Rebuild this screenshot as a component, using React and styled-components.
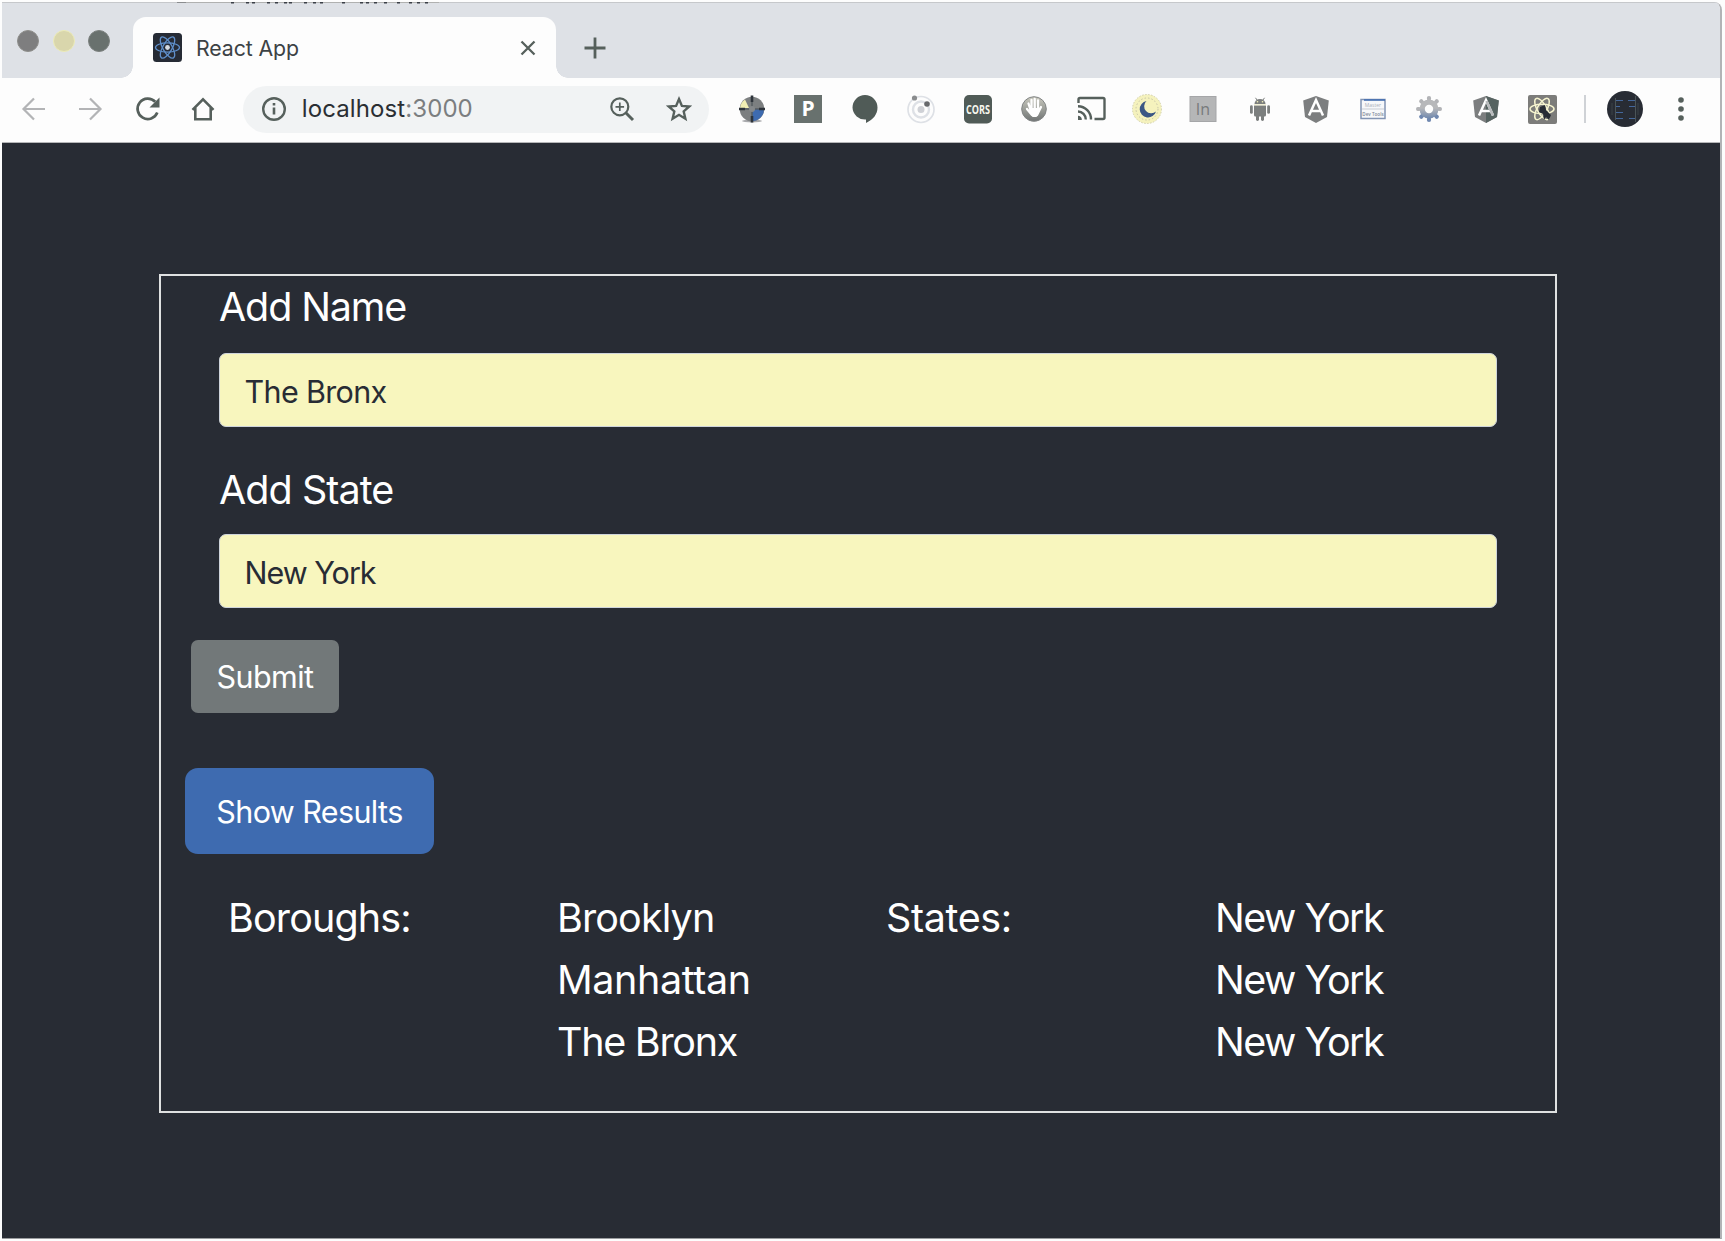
import React from 'react';
import styled, { createGlobalStyle } from 'styled-components';

const Global = createGlobalStyle`
  * { box-sizing: border-box; }
  body { margin: 0; background: #fdfdfd; font-family: Inter, "Liberation Sans", sans-serif; }
`;

const Window = styled.div`
  width: 1720px;
  height: 1237px;
  margin: 2px 0 0 2px;
  display: flex;
  flex-direction: column;
  border-right: 2px solid #b2b3b6;
  border-bottom: 1px solid #9b9d9f;
  border-radius: 0 8px 0 0;
  overflow: hidden;
`;

const TabStrip = styled.div`
  position: relative;
  height: 76px;
  flex: none;
  display: flex;
  background: #dee1e6;
  border-top: 1px solid #c6c8cb;
`;

const EdgeMarks = styled.svg`
  position: absolute;
  top: -1px;
  left: 0;
`;

const Lights = styled.div`
  display: flex;
  gap: 13.5px;
  width: 131px;
  padding: 27px 0 0 15px;
`;

const Light = styled.span`
  width: 22px;
  height: 22px;
  border-radius: 50%;
  background: ${(p) => p.$fill};
  border: 1px solid ${(p) => p.$edge};
`;

const Tab = styled.div`
  width: 423px;
  height: 61px;
  margin-top: 14px;
  display: flex;
  align-items: center;
  padding: 0 18px 0 20px;
  background: #fdfdfd;
  border-radius: 13px 13px 0 0;
  position: relative;
  &::before, &::after {
    content: '';
    position: absolute;
    bottom: 0;
    width: 12px;
    height: 12px;
  }
  &::before { left: -12px; background: radial-gradient(circle at 0 0, transparent 11.5px, #fdfdfd 12px); }
  &::after { right: -12px; background: radial-gradient(circle at 100% 0, transparent 11.5px, #fdfdfd 12px); }
`;

const TabTitle = styled.span`
  flex: 1;
  margin-left: 14px;
  font-size: 21.3px;
  line-height: 30px;
  letter-spacing: -0.1px;
  color: #3c4245;
`;

const NewTab = styled.div`
  padding: 27px 0 0 21px;
`;

const Toolbar = styled.div`
  height: 65px;
  flex: none;
  display: flex;
  align-items: center;
  padding: 0 0 2px 3.5px;
  background: #fdfdfd;
  border-bottom: 1px solid #b6b7b9;
`;

const Slot = styled.span`
  width: ${(p) => p.$w || 56.45}px;
  flex: none;
  display: flex;
  justify-content: center;
`;

const Omnibox = styled.div`
  width: 466px;
  height: 47px;
  margin: 0 15px 0 11.5px;
  padding: 0 14px 0 15px;
  display: flex;
  align-items: center;
  border-radius: 24px;
  background: #f1f3f4;
`;

const Url = styled.span`
  flex: 1;
  margin-left: 12px;
  font-size: 24px;
  line-height: 34px;
  letter-spacing: 0.1px;
  color: #2a2e33;
`;

const Port = styled.span`
  color: #7b7e80;
`;

const OmniIcons = styled.span`
  display: flex;
  gap: 24.5px;
`;

const Separator = styled.span`
  width: 2px;
  height: 28px;
  margin: 0 21px 0 14px;
  background: #cfd2d6;
`;

const Page = styled.main`
  flex: 1;
  background: #282c34;
  padding: 131px 0 0 157px;
`;

const Panel = styled.section`
  width: 1398px;
  height: 839px;
  border: 2px solid #dfe1e1;
  padding: 1px 58px 0 23px;
  display: flex;
  flex-direction: column;
`;

const Field = styled.label`
  display: flex;
  flex-direction: column;
  margin: 0 0 ${(p) => p.$after}px 35px;
`;

const Caption = styled.span`
  height: ${(p) => p.$h}px;
  font-size: 39.5px;
  line-height: 61px;
  color: #fff;
  letter-spacing: ${(p) => p.$ls || 0}px;
`;

const Input = styled.input`
  width: 1278px;
  height: 74px;
  padding: 3px 24.500px 0;
  border: 1px solid #ced4da;
  border-radius: 7px;
  background: #f8f6be;
  color: #282c34;
  font: 30.5px Inter, "Liberation Sans", sans-serif;
  letter-spacing: ${(p) => p.$ls || 0}px;
  outline: none;
`;

const Button = styled.button`
  align-self: flex-start;
  border: 0;
  padding: 0;
  color: #fff;
  font: 30.5px Inter, "Liberation Sans", sans-serif;
  letter-spacing: -0.6px;
`;

const SubmitButton = styled(Button)`
  width: 148px;
  height: 73px;
  margin-left: 7px;
  border-radius: 7px;
  background: #727879;
`;

const ResultsButton = styled(Button)`
  width: 249px;
  height: 86px;
  margin: 55px 0 0 1px;
  border-radius: 13px;
  background: #3e6bb0;
`;

const Results = styled.div`
  display: grid;
  grid-template-columns: repeat(4, 329px);
  margin: 34px 0 0 44px;
`;

const Column = styled.div`
  display: flex;
  flex-direction: column;
`;

const Cell = styled.span`
  font-size: 39.5px;
  line-height: 61.8px;
  color: #fff;
  letter-spacing: ${(p) => p.$ls || 0}px;
`;

const Glyph = styled.svg`
  display: block;
  flex: none;
  overflow: visible;
`;

const Svg = ({ s = 32, children, ...rest }) => (
  <Glyph width={s} height={s} viewBox={`0 0 ${s} ${s}`} fill="none" {...rest}>{children}</Glyph>
);

const SvgLabel = styled.text`
  font-family: "Open Sans", sans-serif;
  font-weight: ${(p) => p.$weight || 700};
  text-anchor: middle;
`;

const ink = '#56605c';

const Orbits = ({ cx, cy, rx, ry, stroke, w }) => (
  <g stroke={stroke} strokeWidth={w}>
    {[0, 60, 120].map((a) => (
      <ellipse key={a} cx={cx} cy={cy} rx={rx} ry={ry} transform={`rotate(${a} ${cx} ${cy})`} />
    ))}
  </g>
);

const Favicon = () => (
  <Svg s={29}>
    <rect width="29" height="29" rx="3.5" fill="#262b35" />
    <Orbits cx={14.5} cy={14.5} rx={12} ry={4.6} stroke="#5f8fca" w={1.3} />
    <circle cx="14.5" cy="14.5" r="2.4" fill="#d5dbe2" />
  </Svg>
);

const Back = () => <Svg stroke="#b3b4b6" strokeWidth="2.2"><path d="M27 16H6M16 5.500L5.500 16L16 26.500" /></Svg>;
const Forward = () => <Svg stroke="#b3b4b6" strokeWidth="2.2"><path d="M5 16H26M16 5.500L26.500 16L16 26.500" /></Svg>;
const Reload = () => (
  <Svg>
    <path d="M26.300 19.500A10.200 10.200 0 1 1 24.200 8.800" stroke={ink} strokeWidth="2.700" />
    <path d="M28.500 4.500V14.500H18.500Z" fill={ink} />
  </Svg>
);
const Home = () => <Svg stroke={ink} strokeWidth="2.600"><path d="M5.500 16.800L16 6.300L26.500 16.800M8.300 14.500V26.300H23.700V14.500" /></Svg>;
const Info = () => (
  <Svg>
    <circle cx="16" cy="16" r="10.800" stroke={ink} strokeWidth="2.400" />
    <path d="M16 14.500V21.500M16 10V12.600" stroke={ink} strokeWidth="2.600" />
  </Svg>
);
const ZoomIn = () => (
  <Svg stroke={ink}>
    <circle cx="13.800" cy="13.800" r="8.500" strokeWidth="2.200" />
    <path d="M13.800 9.500V18.100M9.500 13.800H18.100" strokeWidth="1.700" />
    <path d="M19.800 19.800L27 27" strokeWidth="3" />
  </Svg>
);
const Star = () => <Svg><path d="M16 6L18.900 12.900L26.300 13.500L20.700 18.400L22.400 25.700L16 21.800L9.600 25.700L11.300 18.400L5.700 13.500L13.100 12.900Z" stroke={ink} strokeWidth="2.400" /></Svg>;

const Target = () => (
  <Svg>
    <ellipse cx="16" cy="28" rx="10" ry="1.500" fill="#a9aaad" />
    <circle cx="16" cy="16" r="12.300" fill="#7c7f80" />
    <path d="M16 18L18 16H28A12 12 0 0 1 16 28Z" fill="#3e6bb0" />
    <path d="M13 15H4A12 12 0 0 1 9 6.500Z" fill="#f2efb4" />
    <path d="M16 2.500V9M16 23V29.500M3 16H9M23 16H29" stroke="#2e343b" strokeWidth="2.600" />
    <path d="M16 9V23M9 16H23" stroke="#565c60" strokeWidth="1.500" />
    <circle cx="16" cy="16" r="3" fill="#85888a" />
  </Svg>
);
const LetterP = () => (
  <Svg>
    <rect x="2" y="2" width="28" height="28" fill="#68716e" />
    <SvgLabel x="16" y="23" fontSize="21" fill="#fff">P</SvgLabel>
  </Svg>
);
const Balloon = () => <Svg><path d="M16 2A12.500 12.500 0 0 1 28.500 14.500C28.500 21 24.500 26.500 17 30V26.500A12.500 12.500 0 0 1 3.500 14.500A12.500 12.500 0 0 1 16 2Z" fill="#505b57" /></Svg>;
const Planets = () => (
  <Svg>
    <circle cx="16" cy="16.500" r="13" stroke="#dee1e6" strokeWidth="1.700" />
    <circle cx="16" cy="16.500" r="8" stroke="#dee1e6" strokeWidth="2.400" />
    <circle cx="16" cy="16.500" r="3.500" fill="#cfd1d6" />
    <circle cx="9.500" cy="5" r="2.600" fill="#8a8c8e" />
    <circle cx="22" cy="11" r="2.800" fill="#67696c" />
  </Svg>
);
const Cors = () => (
  <Svg>
    <rect x="2" y="2" width="28" height="28.500" rx="5" fill="#505b57" />
    <SvgLabel x="16" y="20.500" fontSize="12" textLength="24" lengthAdjust="spacingAndGlyphs" fill="#f7f7ee">CORS</SvgLabel>
  </Svg>
);
const Hand = () => (
  <Svg>
    <defs><linearGradient id="handFill" x1="0" y1="0" x2="0" y2="1"><stop offset="0" stopColor="#c9c9be" /><stop offset="1" stopColor="#707474" /></linearGradient></defs>
    <circle cx="16" cy="16" r="12.300" fill="url(#handFill)" stroke="#828585" strokeWidth="1" />
    <path d="M10.500 10.500L12.500 17M13.500 7V16M16.700 6V16M20 7.500V17M9 16L14 22M23 14L19 22" stroke="#fff" strokeWidth="2.300" strokeLinecap="round" />
    <path d="M12 15H21V20L18.500 24H14.500L11.500 19Z" fill="#fff" />
  </Svg>
);
const Cast = () => (
  <Svg stroke={ink} strokeWidth="2.400">
    <path d="M3.500 10V6.500Q3.500 5 5 5H28Q29.500 5 29.500 6.500V24.500Q29.500 26 28 26H19.500" />
    <path d="M3 13.300A13 13 0 0 1 16 26.500M3 18.500A8 8 0 0 1 10.800 26.500" />
    <path d="M3 22.800A3.800 3.800 0 0 1 6.800 27H3Z" fill={ink} stroke="none" />
  </Svg>
);
const Moon = () => (
  <Svg>
    <circle cx="16" cy="16" r="14.500" fill="#f5f2bd" stroke="#d2d0ae" strokeDasharray="1.500 1.500" />
    <circle cx="16" cy="16" r="11" stroke="#c5c3a8" strokeDasharray="1.500 2" />
    <path d="M15.500 8A8.300 8.300 0 1 0 25 18.500A6 6 0 1 1 15.500 8Z" fill="#3b5784" />
  </Svg>
);
const LetterIn = () => (
  <Svg>
    <rect x="3" y="3.500" width="26" height="25" fill="#b5b6b7" stroke="#a5a6a8" />
    <SvgLabel x="16" y="21.500" fontSize="16" $weight={400} fill="#787a7c">In</SvgLabel>
  </Svg>
);
const Android = () => (
  <Svg>
    <g fill="#7c7f7e">
      <path d="M10.500 11A5.500 5 0 0 1 21.500 11Z" />
      <path d="M10 12.500H22V22Q22 23.500 20.500 23.500H11.500Q10 23.500 10 22Z" />
      <rect x="6" y="12.300" width="2.800" height="8.500" rx="1.400" />
      <rect x="23.200" y="12.300" width="2.800" height="8.500" rx="1.400" />
      <rect x="12" y="22" width="3" height="6" rx="1.400" />
      <rect x="17" y="22" width="3" height="6" rx="1.400" />
    </g>
    <path d="M11.500 4.800L13 7M20.500 4.800L19 7" stroke="#7c7f7e" />
    <circle cx="13.500" cy="8.800" r=".8" fill="#f8f6be" /><circle cx="18.500" cy="8.800" r=".8" fill="#f8f6be" />
    <path d="M10 11.800H22" stroke="#e9e6b8" strokeWidth=".8" />
  </Svg>
);
const Angular = ({ dark }) => (
  <Svg>
    <path d="M16 3L28.800 7.500L27 24L16 30L5 24L3.200 7.500Z" fill="#7c7e7f" />
    {dark && <path d="M16 3L28.800 7.500L27 24L16 30Z" fill="#566361" />}
    <path d="M9 22.500L16 7L23 22.500M11.800 18H20.200" stroke="#fff" strokeWidth="2.500" />
    {dark && <path d="M16.500 8L23 22.500" stroke="#b8babc" strokeWidth="2.500" />}
  </Svg>
);
const Card = () => (
  <Svg>
    <rect x="4" y="6.500" width="24" height="19" fill="#f7f8fa" stroke="#8294b3" strokeWidth="1.500" />
    <path d="M7 7H28" stroke="#3e6bb0" strokeWidth="1.600" />
    <path d="M5 16H27" stroke="#c9cdd4" strokeWidth="1" />
    <SvgLabel x="16" y="13.500" fontSize="5" $weight={400} fill="#aab0b9">Master</SvgLabel>
    <SvgLabel x="16" y="22.500" fontSize="4.600" $weight={600} fill="#7d8797">Dev Tools</SvgLabel>
  </Svg>
);
const Gear = () => (
  <Svg>
    <defs><linearGradient id="gearFill" x1="0" y1="0" x2="0" y2="1"><stop offset=".45" stopColor="#b7b8ba" /><stop offset="1" stopColor="#7088ae" /></linearGradient></defs>
    <g fill="url(#gearFill)">
      {[0, 45, 90, 135, 180, 225, 270, 315].map((a) => (
        <path key={a} d="M14.300 8L13.900 5Q13.800 3 16 3Q18.200 3 18.100 5L17.700 8Z" fill={a > 90 && a < 270 ? '#7088b0' : '#b2b3b6'} transform={`rotate(${a} 16 16)`} />
      ))}
      <path fillRule="evenodd" d="M16 6.500A9.500 9.500 0 1 1 16 25.500A9.500 9.500 0 1 1 16 6.500ZM16 11.800A4.200 4.200 0 1 0 16 20.200A4.200 4.200 0 1 0 16 11.800Z" />
    </g>
  </Svg>
);
const ReactSight = () => (
  <Svg>
    <rect x="2" y="2" width="29" height="29" rx="2" fill="#7c7c7a" />
    <Orbits cx={16} cy={16} rx={12} ry={4.700} stroke="#f6f4cf" w={1.500} />
    <path d="M14 14L19 12L20 17L25 22L23 27L20 24L18 27L17 21L13 19Z" fill="#282c34" />
  </Svg>
);
const Avatar = () => (
  <Svg s={36}>
    <circle cx="18" cy="18" r="18" fill="#282c34" />
    <path d="M8.500 7V29M28.500 5V31" stroke="#4b5558" />
    <path d="M9 9.500H16M21 9.500H28M9 15.500H13M22 15.500H28M9 21.500H16M9 27.500H16M22 27.500H28" stroke="#44679b" strokeWidth="1.200" />
    <path d="M5 12V24M31 12V24" stroke="#3b4347" />
  </Svg>
);
const Dots = () => <Svg>{[7, 16, 25].map((y) => <circle key={y} cx="16" cy={y} r="2.800" fill={ink} />)}</Svg>;
const Close = () => <Svg s={20}><path d="M3.500 3.500L16.500 16.500M16.500 3.500L3.500 16.500" stroke={ink} strokeWidth="2.300" /></Svg>;
const Plus = () => <Svg s={36}><path d="M18 7.500V28.500M7.500 18H28.500" stroke={ink} strokeWidth="2.800" /></Svg>;

const extensions = [Target, LetterP, Balloon, Planets, Cors, Hand, Cast, Moon, LetterIn, Android, Angular, Card, Gear, () => <Angular dark />, ReactSight];
const marks = [229, 244, 250, 265, 273, 282, 287, 302, 311, 318, 340, 358, 364, 372, 382, 395, 407, 415, 423];
const boroughs = [['Brooklyn', -0.88], ['Manhattan', -0.4], ['The Bronx', -1.29]];
const states = ['New York', 'New York', 'New York'];

export default function App() {
  return (
    <>
      <Global />
      <Window>
        <TabStrip>
          <EdgeMarks width="440" height="2">
            <rect x="175" width="9" height="1" fill="#8b8d8f" />
            <rect x="184" width="253" height="1" fill="#b0b1b0" />
            {marks.map((x) => <rect key={x} x={x} width="3" height="1.500" fill="#3a3f46" />)}
          </EdgeMarks>
          <Lights>
            <Light $fill="#7e7e7f" $edge="#8f8f8c" />
            <Light $fill="#d9d6ac" $edge="#ecebb8" />
            <Light $fill="#69716e" $edge="#7d8280" />
          </Lights>
          <Tab>
            <Favicon />
            <TabTitle>React App</TabTitle>
            <Close />
          </Tab>
          <NewTab><Plus /></NewTab>
        </TabStrip>
        <Toolbar>
          <Slot><Back /></Slot>
          <Slot><Forward /></Slot>
          <Slot><Reload /></Slot>
          <Slot><Home /></Slot>
          <Omnibox>
            <Info />
            <Url>localhost<Port>:3000</Port></Url>
            <OmniIcons><ZoomIn /><Star /></OmniIcons>
          </Omnibox>
          {extensions.map((Icon, i) => <Slot key={i}><Icon /></Slot>)}
          <Separator />
          <Avatar />
          <Slot $w={76}><Dots /></Slot>
        </Toolbar>
        <Page>
          <Panel>
            <Field $after={33}>
              <Caption $h={76} $ls={-1.15}>Add Name</Caption>
              <Input defaultValue="The Bronx" $ls={-0.66} />
            </Field>
            <Field $after={32}>
              <Caption $h={74} $ls={-0.95}>Add State</Caption>
              <Input defaultValue="New York" $ls={-1} />
            </Field>
            <SubmitButton>Submit</SubmitButton>
            <ResultsButton>Show Results</ResultsButton>
            <Results>
              <Column><Cell $ls={-0.87}>Boroughs:</Cell></Column>
              <Column>{boroughs.map(([name, ls]) => <Cell key={name} $ls={ls}>{name}</Cell>)}</Column>
              <Column><Cell $ls={-0.38}>States:</Cell></Column>
              <Column>{states.map((s, i) => <Cell key={i} $ls={-1.48}>{s}</Cell>)}</Column>
            </Results>
          </Panel>
        </Page>
      </Window>
    </>
  );
}
